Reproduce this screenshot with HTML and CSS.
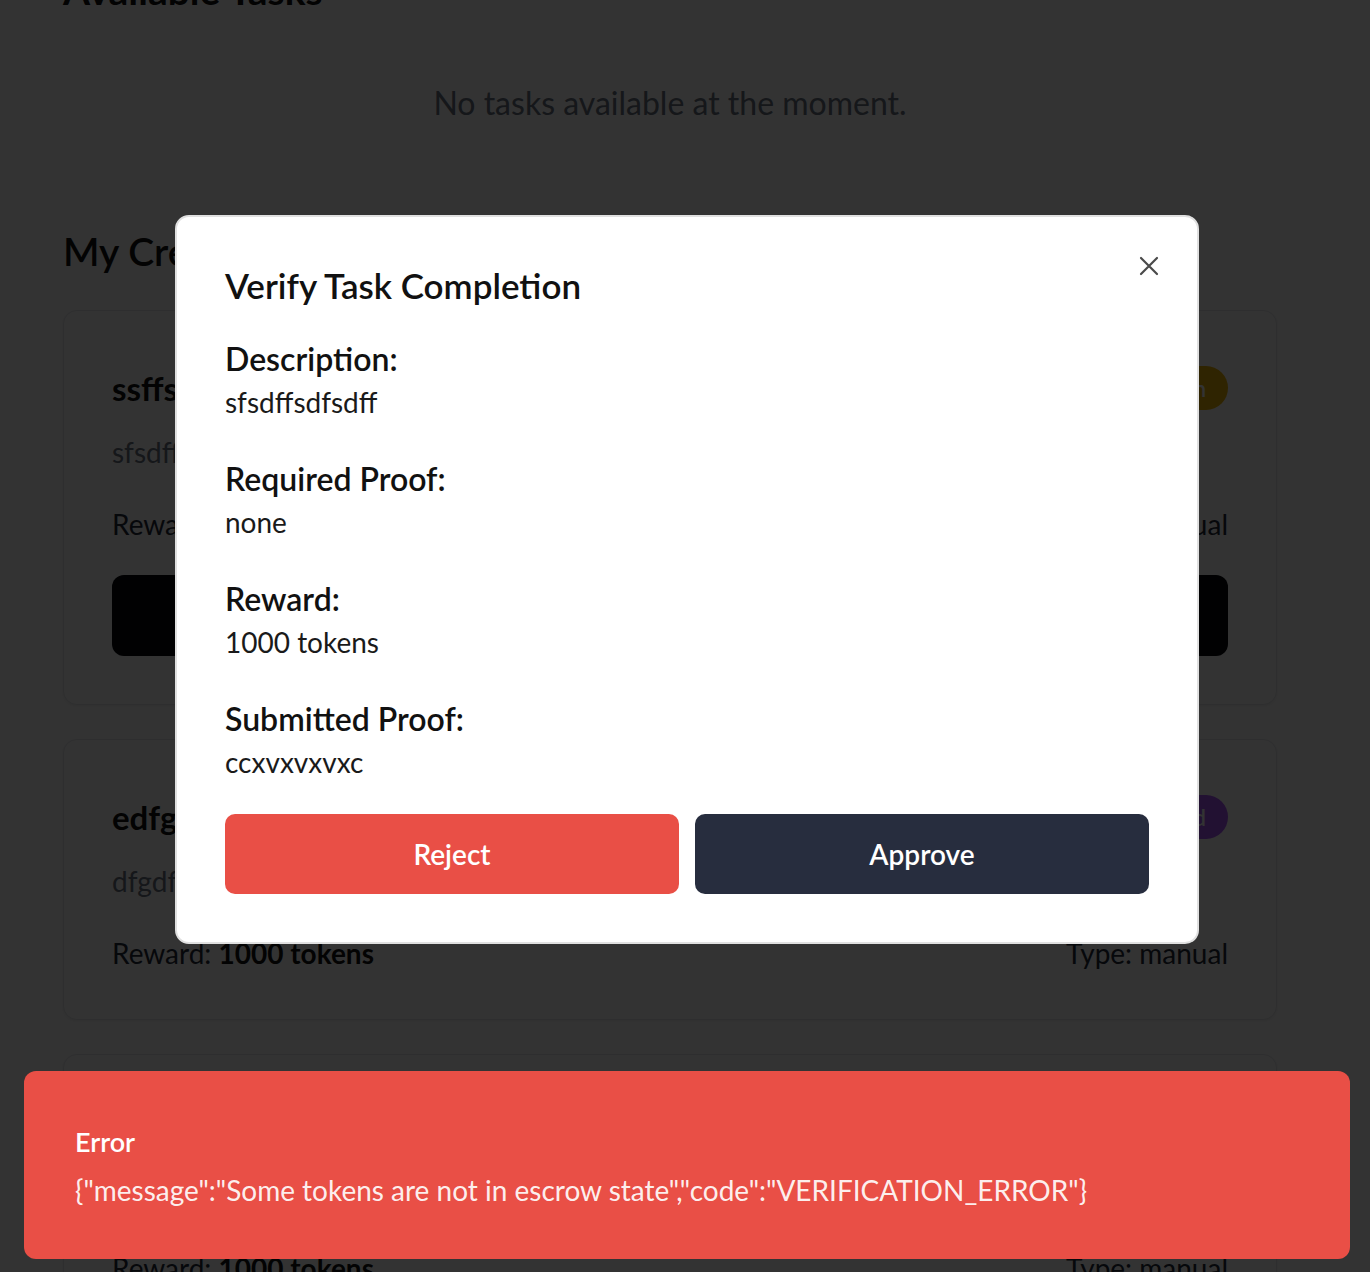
FILE: index.html
```html
<!DOCTYPE html>
<html lang="en">
<head>
<meta charset="utf-8">
<title>Tasks</title>
<link rel="stylesheet" href="styles.css">
</head>
<body>
<main class="page">
  <h2 class="section-title section-title--top">Available Tasks</h2>
  <p class="empty">No tasks available at the moment.</p>
  <h2 class="section-title section-title--mine">My Created Tasks</h2>
  <div class="card-list">
    <article class="card">
      <div class="card-head">
        <h3 class="card-title">ssffsdfsdf</h3>
        <span class="badge badge--pending">Pending Verification</span>
      </div>
      <p class="card-desc">sfsdffsdfsdff</p>
      <div class="card-meta">
        <span>Reward: <strong>1000 tokens</strong></span>
        <span>Type: manual</span>
      </div>
      <button class="card-btn" type="button">Verify Submission</button>
    </article>
    <article class="card">
      <div class="card-head">
        <h3 class="card-title">edfgdfgdfg</h3>
        <span class="badge badge--done">Completed</span>
      </div>
      <p class="card-desc">dfgdfgdfgdfg</p>
      <div class="card-meta">
        <span>Reward: <strong>1000 tokens</strong></span>
        <span>Type: manual</span>
      </div>
    </article>
    <article class="card">
      <div class="card-head">
        <h3 class="card-title">sdfsdfsdf</h3>
        <span class="badge badge--done">Completed</span>
      </div>
      <p class="card-desc">sdfsdfsdfsdf</p>
      <div class="card-meta">
        <span>Reward: <strong>1000 tokens</strong></span>
        <span>Type: manual</span>
      </div>
    </article>
  </div>
</main>

<div class="overlay"></div>

<div class="modal" role="dialog" aria-labelledby="modal-title">
  <button class="modal-close" type="button" aria-label="Close">
    <svg width="20" height="20" viewBox="0 0 20 20" fill="none" stroke="currentColor" stroke-width="2.2" stroke-linecap="round">
      <path d="M2 2 L18 18 M18 2 L2 18"/>
    </svg>
  </button>
  <h2 class="modal-title" id="modal-title">Verify Task Completion</h2>
  <div class="modal-sections">
    <section class="field">
      <h4 class="field-label">Description:</h4>
      <p class="field-value">sfsdffsdfsdff</p>
    </section>
    <section class="field">
      <h4 class="field-label">Required Proof:</h4>
      <p class="field-value">none</p>
    </section>
    <section class="field">
      <h4 class="field-label">Reward:</h4>
      <p class="field-value">1000 tokens</p>
    </section>
    <section class="field">
      <h4 class="field-label">Submitted Proof:</h4>
      <p class="field-value">ccxvxvxvxc</p>
    </section>
  </div>
  <div class="modal-actions">
    <button class="btn btn--reject" type="button">Reject</button>
    <button class="btn btn--approve" type="button">Approve</button>
  </div>
</div>

<div class="toast" role="alert">
  <div class="toast-title">Error</div>
  <div class="toast-msg">{"message":"Some tokens are not in escrow state","code":"VERIFICATION_ERROR"}</div>
</div>
</body>
</html>
```

FILE: styles.css
```css
* {
  box-sizing: border-box;
}

html, body {
  margin: 0;
  padding: 0;
  background: #ffffff;
}

body {
  font-family: "Lato", "Noto Sans", sans-serif;
  color: #111111;
  overflow: hidden;
}

.page {
  width: 1214px;
  margin: 0 0 0 63px;
}

.section-title {
  margin: 0;
  font-size: 39px;
  line-height: 44px;
  font-weight: 600;
  color: #111111;
}

.section-title--top {
  margin-top: -32px;
  font-weight: 700;
}

.empty {
  margin: 73px 0 0;
  text-align: center;
  font-size: 32px;
  line-height: 36px;
  color: #6b7280;
}

.section-title--mine {
  margin-top: 108px;
}

.card-list {
  margin-top: 37px;
  display: flex;
  flex-direction: column;
  gap: 34px;
}

.card {
  border: 1px solid #e5e7eb;
  border-radius: 14px;
  padding: 48px;
  background: #ffffff;
  box-shadow: 0 1px 3px rgba(0, 0, 0, 0.08);
}

.card-head {
  display: flex;
  align-items: center;
  justify-content: space-between;
  min-height: 58px;
}

.card-title {
  margin: 0;
  font-size: 33px;
  line-height: 40px;
  font-weight: 700;
}

.badge {
  display: inline-flex;
  align-items: center;
  height: 44px;
  padding: 0 22px;
  border-radius: 22px;
  color: #ffffff;
  font-size: 22px;
  font-weight: 600;
}

.badge--pending {
  background: #eab308;
}

.badge--done {
  background: #a855f7;
}

.card-desc {
  margin: 17px 0 0;
  font-size: 28px;
  line-height: 36px;
  color: #6b7280;
}

.card-meta {
  margin-top: 36px;
  display: flex;
  justify-content: space-between;
  font-size: 28px;
  line-height: 36px;
  color: #1f2937;
}

.card-meta strong {
  font-weight: 700;
  color: #111111;
}

.card-btn {
  display: block;
  width: 100%;
  height: 81px;
  margin-top: 33px;
  border: 0;
  border-radius: 12px;
  background: #05070c;
  color: #ffffff;
  font-family: inherit;
  font-size: 28px;
  font-weight: 600;
}

.overlay {
  position: fixed;
  inset: 0;
  background: rgba(0, 0, 0, 0.8);
}

.modal {
  position: fixed;
  left: 175px;
  top: 215px;
  width: 1024px;
  padding: 48px;
  background: #ffffff;
  border: 2px solid #e0e0e0;
  border-radius: 14px;
}

.modal-close {
  position: absolute;
  top: 39px;
  right: 38px;
  width: 20px;
  height: 20px;
  padding: 0;
  border: 0;
  background: transparent;
  color: #4a4a4a;
  display: flex;
}

.modal-title {
  margin: 0 0 34px;
  font-size: 35px;
  line-height: 40px;
  font-weight: 600;
  color: #111111;
}

.modal-sections {
  display: flex;
  flex-direction: column;
  gap: 39px;
}

.field-label {
  margin: 0;
  font-size: 32px;
  line-height: 40px;
  font-weight: 600;
  color: #111111;
}

.field-value {
  margin: 5px 0 0;
  font-size: 28px;
  line-height: 36px;
  color: #1a1a1a;
}

.modal-actions {
  margin-top: 34px;
  display: grid;
  grid-template-columns: 1fr 1fr;
  gap: 16px;
}

.btn {
  height: 80px;
  border: 0;
  border-radius: 10px;
  color: #ffffff;
  font-family: inherit;
  font-size: 28px;
  font-weight: 600;
}

.btn--reject {
  background: #e94f46;
}

.btn--approve {
  background: #272d3e;
}

.toast {
  position: fixed;
  left: 24px;
  top: 1071px;
  width: 1326px;
  height: 188px;
  padding: 53px 64px 0 51px;
  background: #e94f46;
  border-radius: 12px;
  color: #ffffff;
}

.toast-title {
  font-size: 27px;
  line-height: 36px;
  font-weight: 600;
}

.toast-msg {
  margin-top: 12px;
  font-size: 28px;
  line-height: 36px;
  color: rgba(255, 255, 255, 0.92);
}
```
